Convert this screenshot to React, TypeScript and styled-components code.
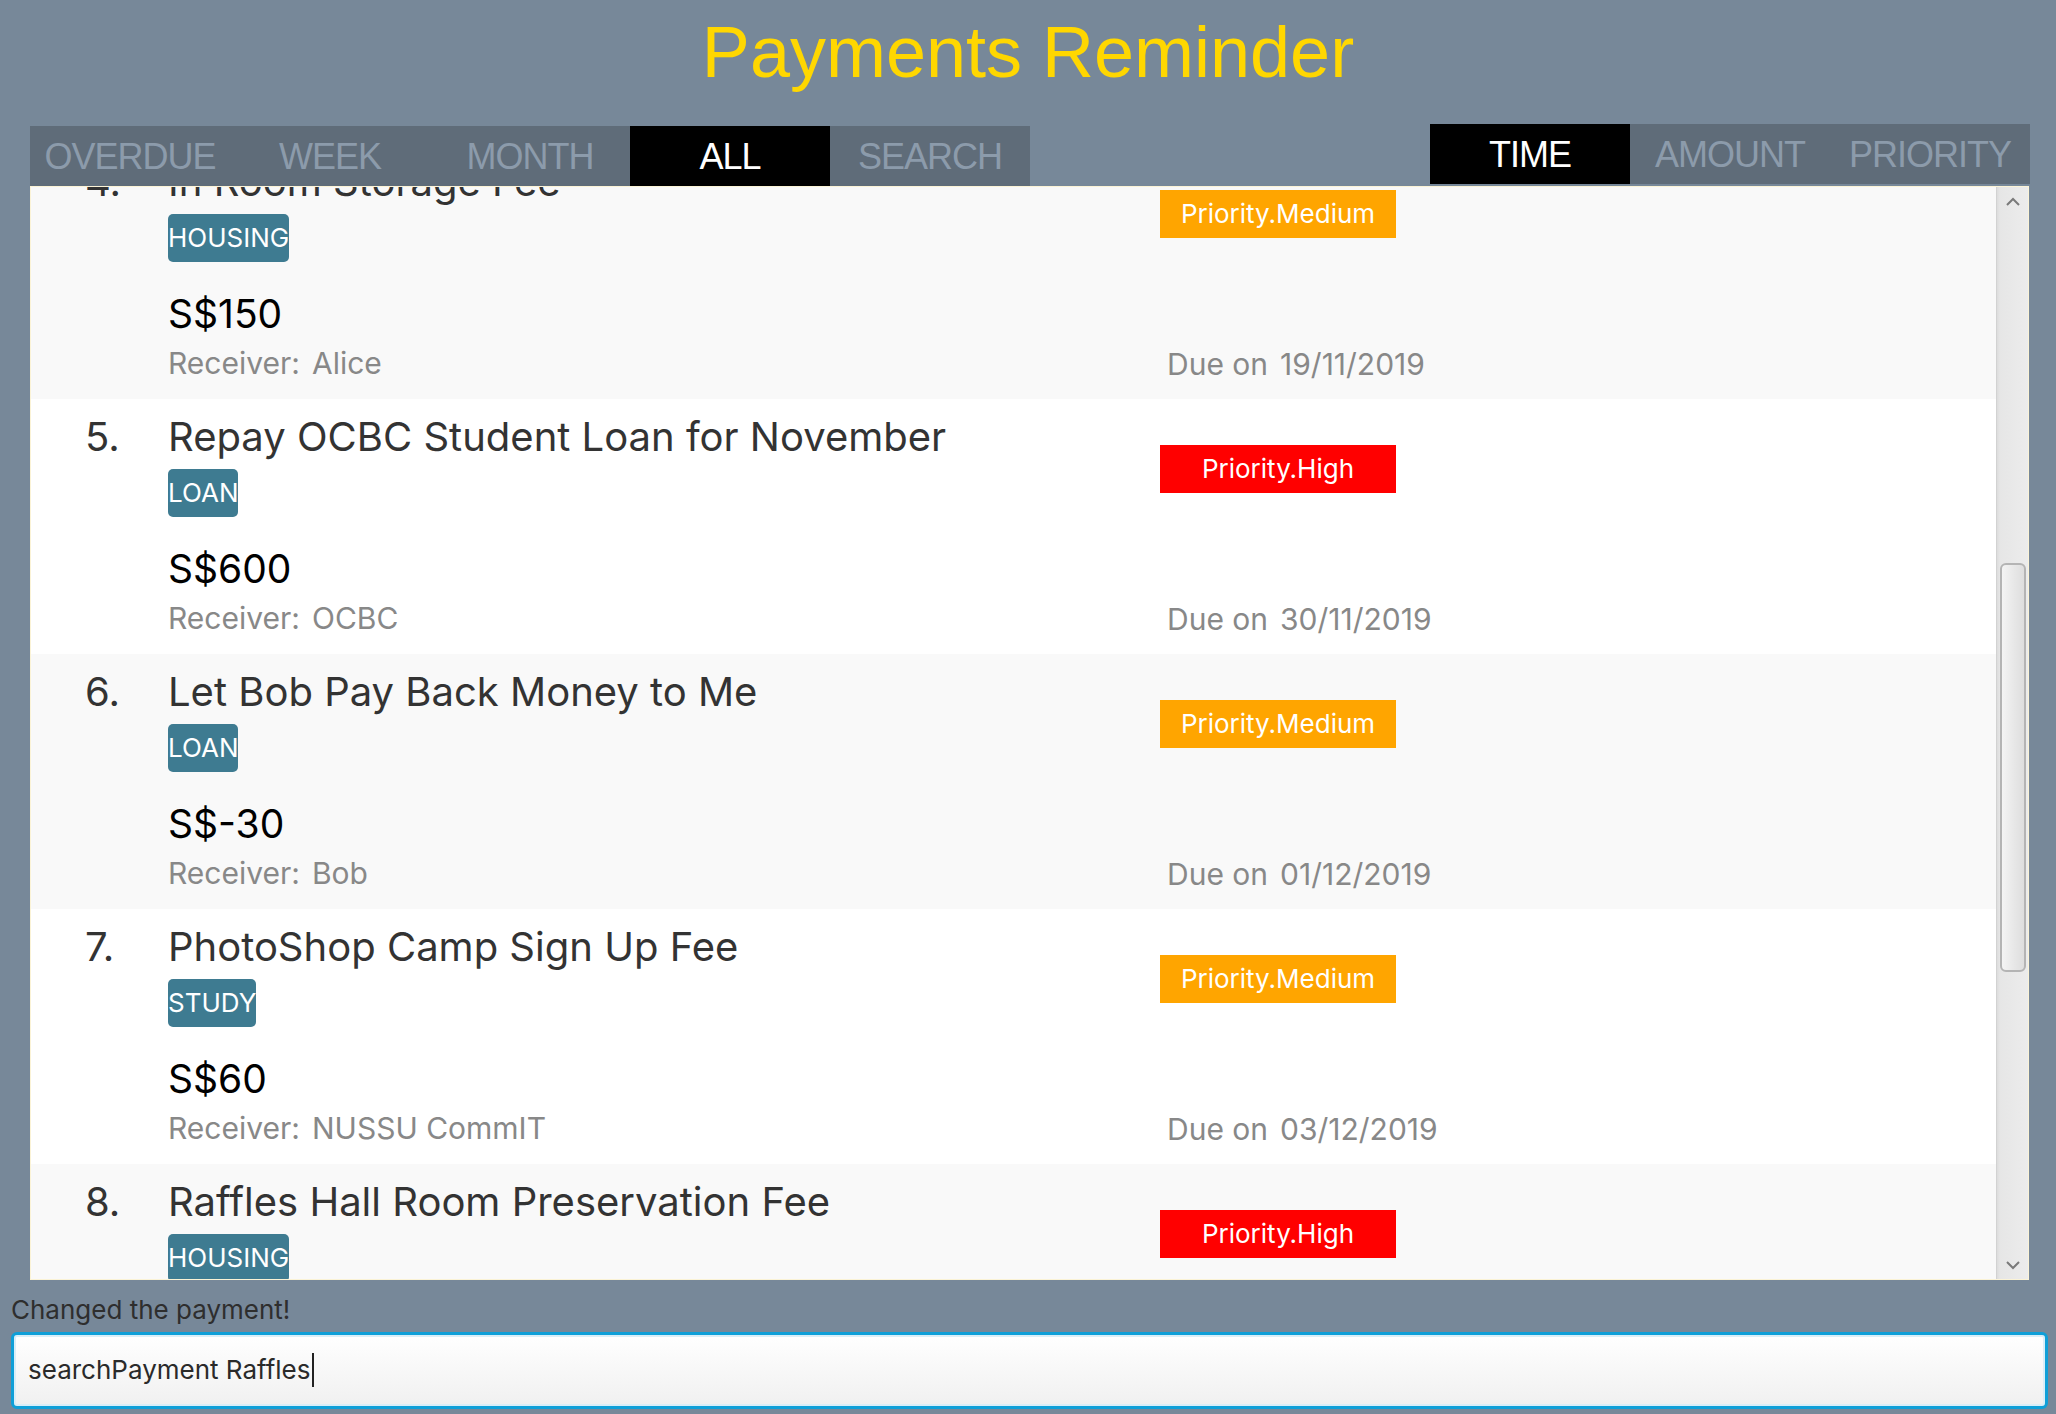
import React, { useLayoutEffect, useRef, useState } from "react";
import styled, { createGlobalStyle } from "styled-components";

const GlobalStyle = createGlobalStyle`
  html, body { margin: 0; padding: 0; background: #778899; }
  body { font-family: Inter, "Noto Sans", sans-serif; }
  * { box-sizing: border-box; }
`;

const Page = styled.div`
  width: 2056px;
  height: 1414px;
  background: #778899;
  display: flex;
  flex-direction: column;
  overflow: hidden;
`;

const Title = styled.h1`
  margin: 0;
  padding-top: 16px;
  height: 124px;
  font-family: "Liberation Sans", Arial, sans-serif;
  font-weight: 400;
  font-size: 72px;
  line-height: 72px;
  color: #ffd700;
  text-align: center;
`;

const TabsRow = styled.div`
  display: flex;
  justify-content: space-between;
  align-items: flex-start;
  padding: 0 26px 0 30px;
  height: 62px;
`;

const TabBar = styled.div<{ $offset?: number }>`
  display: flex;
  background: #5f6c79;
  height: 60px;
  margin-top: ${(p) => p.$offset ?? 0}px;
`;

const Tab = styled.div<{ $active?: boolean }>`
  width: 200px;
  height: 60px;
  padding-top: 1px;
  text-align: center;
  font-family: "Liberation Sans", Arial, sans-serif;
  font-size: 36px;
  line-height: 59px;
  letter-spacing: -1px;
  color: ${(p) => (p.$active ? "#ffffff" : "#8c9bab")};
  background: ${(p) => (p.$active ? "#000000" : "transparent")};
`;

const ListFrame = styled.div`
  margin: 0 27px 0 30px;
  height: 1094px;
  border: 1px solid #fbf3d6;
  display: flex;
  background: #ffffff;
`;

const Viewport = styled.div`
  flex: 1;
  overflow: hidden;
`;

const Row = styled.div<{ $odd: boolean }>`
  display: flex;
  height: 255px;
  padding: 14px 0 17px 54px;
  background: ${(p) => (p.$odd ? "#f9f9f9" : "#ffffff")};
`;

const Index = styled.div`
  width: 83px;
  font-size: 40px;
  line-height: 48px;
  color: #333333;
`;

const MainCol = styled.div`
  width: 992px;
  display: flex;
  flex-direction: column;
  align-items: flex-start;
`;

const Name = styled.div`
  font-size: 40px;
  line-height: 48px;
  color: #333333;
  white-space: nowrap;
`;

const Tag = styled.div`
  margin-top: 8px;
  height: 48px;
  padding: 0;
  border-radius: 5px;
  background: #3e7b91;
  color: #ffffff;
  font-size: 26px;
  line-height: 48px;
`;

const Amount = styled.div`
  margin-top: 30px;
  font-size: 39px;
  line-height: 44px;
  color: #000000;
`;

const Meta = styled.div<{ $push?: boolean }>`
  margin-top: ${(p) => (p.$push ? "auto" : "9px")};
  font-size: 30px;
  line-height: 36px;
  color: #888888;
  white-space: nowrap;
  padding-left: ${(p) => (p.$push ? "7px" : "0")};
`;

const Value = styled.span`
  margin-left: 12px;
`;

const SideCol = styled.div`
  display: flex;
  flex-direction: column;
  align-items: flex-start;
`;

const PriorityBadge = styled.div<{ $level: "High" | "Medium" }>`
  margin-top: 32px;
  width: 236px;
  height: 48px;
  text-align: center;
  font-size: 26px;
  line-height: 48px;
  color: #ffffff;
  background: ${(p) => (p.$level === "High" ? "#ff0000" : "#ffa500")};
`;

const Track = styled.div`
  width: 32px;
  display: flex;
  flex-direction: column;
  align-items: center;
  background: linear-gradient(to right, #dcdcdc 0, #e6e6e6 3px, #ececec 100%);
  border-left: 1px solid #d2d2d2;
`;

const ArrowBtn = styled.div`
  height: 28px;
  width: 100%;
  display: flex;
  align-items: center;
  justify-content: center;
`;

const ThumbArea = styled.div`
  flex: 1;
  width: 100%;
  display: flex;
  flex-direction: column;
  align-items: center;
`;

const Thumb = styled.div`
  width: 26px;
  border: 2px solid #b4b4b4;
  border-radius: 6px;
  background: linear-gradient(to right, #f4f4f4, #e6e6e6 60%, #dedede);
`;

const Status = styled.div`
  margin: 15px 0 0 11px;
  height: 30px;
  font-size: 26px;
  line-height: 30px;
  color: #2e2e2e;
`;

const CommandBox = styled.div`
  margin: 7px 8px 0 11px;
  height: 77px;
  border: 3px solid #0f9fd8;
  border-radius: 6px;
  background: linear-gradient(to bottom, #ffffff, #f0f0f0);
  box-shadow: inset 0 0 0 2px #d9eef8;
  display: flex;
  align-items: center;
  padding: 0 0 2px 14px;
  font-size: 26px;
  color: #2a2a2a;
`;

const Caret = styled.span`
  display: inline-block;
  width: 2px;
  height: 34px;
  margin-left: 2px;
  background: #222;
`;

const Chevron = ({ up }: { up?: boolean }) => (
  <svg width="14" height="9" viewBox="0 0 14 9">
    <path
      d={up ? "M1 8 L7 2 L13 8" : "M1 1 L7 7 L13 1"}
      fill="none"
      stroke="#7a7a7a"
      strokeWidth="2"
    />
  </svg>
);

type Payment = {
  n: number;
  name: string;
  tag: string;
  amount: string;
  receiver: string;
  level: "High" | "Medium";
  due: string;
};

const payments: Payment[] = [
  { n: 4, name: "In Room Storage Fee", tag: "HOUSING", amount: "S$150", receiver: "Alice", level: "Medium", due: "19/11/2019" },
  { n: 5, name: "Repay OCBC Student Loan for November", tag: "LOAN", amount: "S$600", receiver: "OCBC", level: "High", due: "30/11/2019" },
  { n: 6, name: "Let Bob Pay Back Money to Me", tag: "LOAN", amount: "S$-30", receiver: "Bob", level: "Medium", due: "01/12/2019" },
  { n: 7, name: "PhotoShop Camp Sign Up Fee", tag: "STUDY", amount: "S$60", receiver: "NUSSU CommIT", level: "Medium", due: "03/12/2019" },
  { n: 8, name: "Raffles Hall Room Preservation Fee", tag: "HOUSING", amount: "S$500", receiver: "Raffles Hall", level: "High", due: "05/12/2019" },
];

export default function App() {
  const viewRef = useRef<HTMLDivElement>(null);
  const [thumb] = useState({ top: 348, height: 409 });

  useLayoutEffect(() => {
    if (viewRef.current) viewRef.current.scrollTop = 43;
  }, []);

  return (
    <Page>
      <GlobalStyle />
      <Title>Payments Reminder</Title>
      <TabsRow>
        <TabBar $offset={2}>
          <Tab>OVERDUE</Tab>
          <Tab>WEEK</Tab>
          <Tab>MONTH</Tab>
          <Tab $active>ALL</Tab>
          <Tab>SEARCH</Tab>
        </TabBar>
        <TabBar>
          <Tab $active>TIME</Tab>
          <Tab>AMOUNT</Tab>
          <Tab>PRIORITY</Tab>
        </TabBar>
      </TabsRow>
      <ListFrame>
        <Viewport ref={viewRef}>
          {payments.map((p) => (
            <Row key={p.n} $odd={p.n % 2 === 0}>
              <Index>{p.n}.</Index>
              <MainCol>
                <Name>{p.name}</Name>
                <Tag>{p.tag}</Tag>
                <Amount>{p.amount}</Amount>
                <Meta>
                  Receiver:<Value>{p.receiver}</Value>
                </Meta>
              </MainCol>
              <SideCol>
                <PriorityBadge $level={p.level}>Priority.{p.level}</PriorityBadge>
                <Meta $push>
                  Due on<Value>{p.due}</Value>
                </Meta>
              </SideCol>
            </Row>
          ))}
        </Viewport>
        <Track>
          <ArrowBtn>
            <Chevron up />
          </ArrowBtn>
          <ThumbArea>
            <Thumb style={{ marginTop: thumb.top, height: thumb.height }} />
          </ThumbArea>
          <ArrowBtn>
            <Chevron />
          </ArrowBtn>
        </Track>
      </ListFrame>
      <Status>Changed the payment!</Status>
      <CommandBox>
        searchPayment Raffles
        <Caret />
      </CommandBox>
    </Page>
  );
}
